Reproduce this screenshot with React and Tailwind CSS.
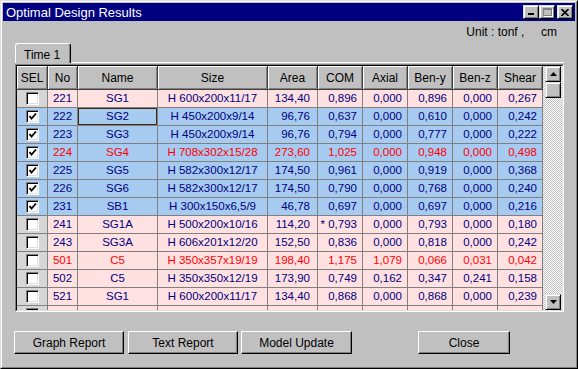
import React from 'react';

const COLS = [
  { key: 'sel', label: 'SEL', w: 'w-[31px]' },
  { key: 'no', label: 'No', w: 'w-[30px]' },
  { key: 'name', label: 'Name', w: 'w-[80px]' },
  { key: 'size', label: 'Size', w: 'w-[110px]' },
  { key: 'area', label: 'Area', w: 'w-[50px]' },
  { key: 'com', label: 'COM', w: 'w-[45px]' },
  { key: 'axial', label: 'Axial', w: 'w-[45px]' },
  { key: 'beny', label: 'Ben-y', w: 'w-[45px]' },
  { key: 'benz', label: 'Ben-z', w: 'w-[45px]' },
  { key: 'shear', label: 'Shear', w: 'w-[45px]' },
];

const ROWS = [
  { sel: false, no: '221', name: 'SG1', size: 'H 600x200x11/17', v: ['134,40', '0,896', '0,000', '0,896', '0,000', '0,267'] },
  { sel: true, no: '222', name: 'SG2', size: 'H 450x200x9/14', v: ['96,76', '0,637', '0,000', '0,610', '0,000', '0,242'], focus: true },
  { sel: true, no: '223', name: 'SG3', size: 'H 450x200x9/14', v: ['96,76', '0,794', '0,000', '0,777', '0,000', '0,222'] },
  { sel: true, no: '224', name: 'SG4', size: 'H 708x302x15/28', v: ['273,60', '1,025', '0,000', '0,948', '0,000', '0,498'], red: true },
  { sel: true, no: '225', name: 'SG5', size: 'H 582x300x12/17', v: ['174,50', '0,961', '0,000', '0,919', '0,000', '0,368'] },
  { sel: true, no: '226', name: 'SG6', size: 'H 582x300x12/17', v: ['174,50', '0,790', '0,000', '0,768', '0,000', '0,240'] },
  { sel: true, no: '231', name: 'SB1', size: 'H 300x150x6,5/9', v: ['46,78', '0,697', '0,000', '0,697', '0,000', '0,216'] },
  { sel: false, no: '241', name: 'SG1A', size: 'H 500x200x10/16', v: ['114,20', '* 0,793', '0,000', '0,793', '0,000', '0,180'] },
  { sel: false, no: '243', name: 'SG3A', size: 'H 606x201x12/20', v: ['152,50', '0,836', '0,000', '0,818', '0,000', '0,242'] },
  { sel: false, no: '501', name: 'C5', size: 'H 350x357x19/19', v: ['198,40', '1,175', '1,079', '0,066', '0,031', '0,042'], red: true },
  { sel: false, no: '502', name: 'C5', size: 'H 350x350x12/19', v: ['173,90', '0,749', '0,162', '0,347', '0,241', '0,158'] },
  { sel: false, no: '521', name: 'SG1', size: 'H 600x200x11/17', v: ['134,40', '0,868', '0,000', '0,868', '0,000', '0,239'] },
  { sel: false, no: '', name: '', size: '', v: ['', '', '', '', '', ''] },
];

const raised =
  'bg-[#c0c0c0] border border-t-[#dfdfdf] border-l-[#dfdfdf] border-r-black border-b-black shadow-[inset_1px_1px_#fff,inset_-1px_-1px_#808080]';

function CheckBox({ checked }) {
  return (
    <div className="w-[13px] h-[13px] bg-white border border-t-[#808080] border-l-[#808080] border-r-white border-b-white shadow-[inset_1px_1px_#000,inset_-1px_-1px_#dfdfdf] flex items-center justify-center">
      {checked && (
        <svg width="9" height="9" viewBox="0 0 9 9">
          <path d="M1.5 4 L3.5 6.5 L8 1.5" fill="none" stroke="#000" strokeWidth="1.8" />
        </svg>
      )}
    </div>
  );
}

function ScrollBtn({ down }) {
  return (
    <div className={`w-[16px] h-[16px] ml-[2px] flex items-center justify-center ${raised}`}>
      <svg width="7" height="4" viewBox="0 0 7 4">
        {down ? <polygon points="0,0 7,0 3.5,4" fill="#000" /> : <polygon points="3.5,0 7,4 0,4" fill="#000" />}
      </svg>
    </div>
  );
}

export default function App() {
  return (
    <div className="w-[578px] h-[369px] bg-[#c0c0c0] border border-t-[#dfdfdf] border-l-[#dfdfdf] border-r-black border-b-black font-['Liberation_Sans',Arial,sans-serif] overflow-hidden">
      <div className="h-full border border-t-white border-l-white border-r-[#808080] border-b-[#808080] p-px flex flex-col">
        {/* title bar */}
        <div className="h-[18px] bg-[#000080] flex items-center pl-[3px] pr-[2px]">
          <span className="text-white text-[13px] leading-none">Optimal Design Results</span>
          <div className="ml-auto flex items-center">
            <div className={`w-[16px] h-[14px] flex items-end pl-[4px] pb-[3px] ${raised}`}>
              <div className="w-[6px] h-[2px] bg-black" />
            </div>
            <div className={`w-[16px] h-[14px] flex items-center justify-center ${raised}`}>
              <div className="w-[9px] h-[8px] border border-[#808080] border-t-2 shadow-[1px_1px_#fff]" />
            </div>
            <div className={`w-[16px] h-[14px] ml-[2px] flex items-center justify-center ${raised}`}>
              <svg width="8" height="7" viewBox="0 0 8 7">
                <path d="M0.5 0 L7.5 7 M7.5 0 L0.5 7" stroke="#000" strokeWidth="1.6" />
              </svg>
            </div>
          </div>
        </div>

        {/* unit */}
        <div className="mt-[4px] h-[14px] flex items-center justify-end pr-[18px] text-[12px] text-black whitespace-pre">
          Unit : tonf ,     cm
        </div>

        {/* tab */}
        <div className="ml-[12px] mt-[4px] relative z-10 -mb-px w-[56px] h-[20px] bg-[#c0c0c0] border-t border-l border-r border-t-white border-l-white border-r-black rounded-t-[3px] shadow-[inset_-1px_0_#808080] pl-[8px] pt-[2px] text-[12px] text-black">
          Time 1
        </div>

        {/* panel */}
        <div className="ml-[12px] w-[549px] border-t border-t-white pt-px">
          <div className="h-[248px] border border-t-[#808080] border-l-[#808080] border-r-white border-b-white">
            <div className="h-full border border-t-black border-l-black border-r-[#dfdfdf] border-b-[#dfdfdf] flex overflow-hidden">
              <div className="w-[526px] flex flex-col">
                {/* header */}
                <div className="flex h-[24px] shrink-0">
                  {COLS.map((c) => (
                    <div
                      key={c.key}
                      className={`${c.w} h-full bg-[#c0c0c0] border-r border-b border-[#404040] shadow-[inset_1px_1px_#fff,inset_-1px_-1px_#808080] flex items-center justify-center text-[12px] text-black`}
                    >
                      {c.label}
                    </div>
                  ))}
                </div>
                {/* rows */}
                {ROWS.map((r, i) => {
                  const bg = r.sel ? 'bg-[#a6caf0]' : 'bg-[#ffe1e1]';
                  const fg = r.red ? 'text-[#ff0000]' : 'text-[#000080]';
                  const cell = `h-full border-r border-[#808080] flex items-center ${bg}`;
                  return (
                    <div key={i} className={`flex h-[18px] shrink-0 border-b border-[#808080] text-[11.5px] ${fg}`}>
                      <div className={`w-[31px] h-full border-r border-[#808080] flex items-center justify-center ${r.sel ? 'bg-[#a6caf0]' : 'bg-[#d6d6d6]'}`}>
                        <CheckBox checked={r.sel} />
                      </div>
                      <div className={`w-[30px] justify-center ${cell}`}>{r.no}</div>
                      <div className={`w-[80px] justify-center ${cell} ${r.focus ? 'p-0' : ''}`}>
                        {r.focus ? (
                          <div className="w-full h-full border border-[#3c2c14] flex items-center justify-center">{r.name}</div>
                        ) : (
                          r.name
                        )}
                      </div>
                      <div className={`w-[110px] justify-center whitespace-pre ${cell}`}>{r.size}</div>
                      <div className={`w-[50px] justify-end pr-[7px] ${cell}`}>{r.v[0]}</div>
                      {r.v.slice(1).map((x, j) => (
                        <div key={j} className={`w-[45px] justify-end pr-[5px] whitespace-pre ${cell}`}>
                          {x}
                        </div>
                      ))}
                    </div>
                  );
                })}
              </div>

              {/* scrollbar */}
              <div className="w-[19px] h-full flex flex-col bg-[repeating-conic-gradient(#c0c0c0_0%_25%,#ffffff_0%_50%)] bg-[length:2px_2px]">
                <ScrollBtn />
                <div className={`w-[16px] h-[16px] ml-[2px] ${raised}`} />
                <div className="flex-1" />
                <ScrollBtn down />
              </div>
            </div>
          </div>
        </div>

        {/* buttons */}
        <div className="mt-[19px] ml-[11px] flex text-[12px] text-black">
          <button className="h-[23px] w-[110px] bg-[#c0c0c0] border border-t-white border-l-white border-r-black border-b-black shadow-[inset_-1px_-1px_#808080]">
            Graph Report
          </button>
          <button className="ml-[4px] h-[23px] w-[110px] bg-[#c0c0c0] border border-t-white border-l-white border-r-black border-b-black shadow-[inset_-1px_-1px_#808080]">
            Text Report
          </button>
          <button className="ml-[3px] h-[23px] w-[111px] bg-[#c0c0c0] border border-t-white border-l-white border-r-black border-b-black shadow-[inset_-1px_-1px_#808080]">
            Model Update
          </button>
          <button className="ml-[66px] h-[23px] w-[92px] bg-[#c0c0c0] border border-t-white border-l-white border-r-black border-b-black shadow-[inset_-1px_-1px_#808080]">
            Close
          </button>
        </div>
      </div>
    </div>
  );
}
